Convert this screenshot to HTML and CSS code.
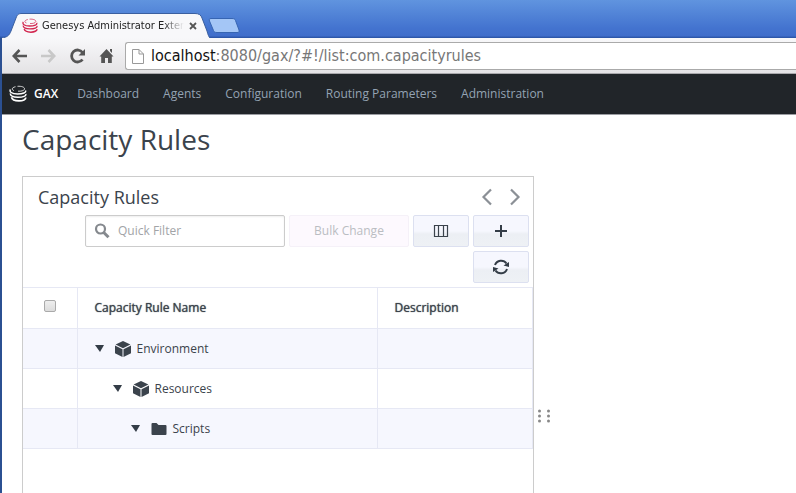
FILE: index.html
```html
<!DOCTYPE html>
<html lang="en">
<head>
<meta charset="utf-8">
<title>Genesys Administrator Exter</title>
<link rel="stylesheet" href="styles.css">
</head>
<body>
<svg class="sprite" aria-hidden="true">
  <symbol id="rings" viewBox="0 0 18 18">
    <g fill="none" stroke="currentColor">
      <path d="M5 5.600C2 4.500 3 2.500 6.500 1.700M8.500 1.300C12.500 1 16 2.200 15.500 4.200C15 5.800 12 6.300 9 6.200" stroke-width="1" opacity=".8"/>
      <path d="M1.500 4.500C0 6.500 2.500 9 8.500 9C14 9 17.500 7.500 16.500 5.500" stroke-width="1.500"/>
      <path d="M1.500 8.500C1 10.500 3.500 12.300 9 12.300C14 12.300 17.500 11 16.800 9" stroke-width="1.500"/>
      <path d="M2.500 12.300C3 14.500 6 15.900 10 15.900C14 15.900 17 14.500 16.800 12.500" stroke-width="1.700"/>
    </g>
  </symbol>
  <symbol id="cube" viewBox="0 0 16 16">
    <path fill="currentColor" d="M8 0L15.400 3.500L8 7.200L.6 3.500ZM0 4.600L7.500 8.200V16L0 12.200ZM16 4.600V12.200L8.500 16V8.200Z"/>
  </symbol>
</svg>

<div class="window">
  <header class="titlebar">
    <div class="tab">
      <svg class="tab-shape" viewBox="0 0 208 25" aria-hidden="true"><path d="M0 25C5 24 7 23 9 18L14 5C15.500 1 17 .5 20 .5H193C197 .5 199 2 200 5L205 18C206 22 207 24 208 25Z" fill="#f8f8fa"/><path d="M0 25C5 24 7 23 9 18L14 5C15.500 1 17 .5 20 .5H193C197 .5 199 2 200 5L205 18C206 22 207 24 208 25" fill="none" stroke="#3a5f9f"/></svg>
      <svg class="tab-logo" aria-hidden="true"><use href="#rings"/></svg>
      <span class="tab-title">Genesys Administrator Exter</span>
      <button class="tab-close" aria-label="Close tab"><svg viewBox="0 0 8 8"><path d="M1 1L7 7M7 1L1 7" stroke="#555" stroke-width="1.800"/></svg></button>
    </div>
    <button class="new-tab" aria-label="New tab"><svg viewBox="0 0 32 17"><path d="M3 1.500H24C26 1.500 27 2 27.500 3.500L31 13C31.500 15 31 15.500 29 15.500H9C7 15.500 6 15 5.500 13.500L1.500 4C1 2.500 1 1.500 3 1.500Z" fill="#a4c6f6" stroke="#3765b2"/></svg></button>
  </header>

  <div class="browserbar">
    <button class="tool" aria-label="Back"><svg viewBox="0 0 16 16"><path d="M15 8H2.500M7.500 2L1.800 8L7.500 14" fill="none" stroke="#555" stroke-width="2.600"/></svg></button>
    <button class="tool" aria-label="Forward"><svg viewBox="0 0 16 16"><path d="M0 8H12.500M7.500 2L13.200 8L7.500 14" fill="none" stroke="#c8c8c8" stroke-width="2.600"/></svg></button>
    <button class="tool" aria-label="Reload"><svg viewBox="0 0 16 16"><path d="M12.500 4.500A6 6 0 1 0 12.500 11.500" fill="none" stroke="#555" stroke-width="2.800"/><path d="M15 1V7.500H8.500Z" fill="#555"/></svg></button>
    <button class="tool" aria-label="Home"><svg viewBox="0 0 16 16"><path d="M7.500 1L14.500 8.500H12.800V15H9V10H6V15H2.200V8.500H.5ZM11 1H13V5L11 3Z" fill="#555"/></svg></button>
    <div class="address">
      <svg class="page-icon" viewBox="0 0 12 16" aria-hidden="true"><path d="M.5 1.500H7L11.500 6V15.500H.5ZM7 1.500V6H11.500" fill="#fff" stroke="#999"/></svg>
      <span class="url"><b>localhost</b>:8080/gax/?#!/list:com.capacityrules</span>
    </div>
  </div>

  <nav class="appnav">
    <a class="brand" href="#"><svg aria-hidden="true"><use href="#rings"/></svg>GAX</a>
    <a href="#">Dashboard</a>
    <a href="#">Agents</a>
    <a href="#">Configuration</a>
    <a href="#">Routing Parameters</a>
    <a href="#">Administration</a>
  </nav>

  <main>
    <h1>Capacity Rules</h1>
    <div class="split">
      <section class="panel">
        <div class="panel-head">
          <h2>Capacity Rules</h2>
          <div class="pager">
            <button aria-label="Previous"><svg viewBox="0 0 12 18"><path d="M10 1.500L2.500 9L10 16.500" fill="none" stroke="#8b9096" stroke-width="2.200"/></svg></button>
            <button aria-label="Next"><svg viewBox="0 0 12 18"><path d="M2 1.500L9.500 9L2 16.500" fill="none" stroke="#8b9096" stroke-width="2.200"/></svg></button>
          </div>
        </div>
        <div class="actions">
          <label class="search">
            <svg viewBox="0 0 16 16" aria-hidden="true"><circle cx="6.500" cy="6" r="4.500" fill="none" stroke="#85898e" stroke-width="2.200"/><path d="M9.500 9.300L14.500 14.200" stroke="#85898e" stroke-width="3"/></svg>
            <input type="text" placeholder="Quick Filter" aria-label="Quick Filter">
          </label>
          <button class="btn bulk" disabled>Bulk Change</button>
          <button class="btn" aria-label="Columns"><svg viewBox="0 0 16 16"><path d="M1.500 2.500H14.500V13.500H1.500ZM5.500 2.500V13.500M10.500 2.500V13.500" fill="none" stroke="#3b434c" stroke-width="1.200"/></svg></button>
          <button class="btn" aria-label="Add"><svg viewBox="0 0 16 16"><path d="M2 8H14M8 2V14" stroke="#343d47" stroke-width="2"/></svg></button>
          <button class="btn" aria-label="Refresh"><svg viewBox="0 0 16 16"><path d="M2 6A6.500 6.500 0 0 1 13.500 4.500M14 10A6.500 6.500 0 0 1 2.500 11.500" fill="none" stroke="#343d47" stroke-width="2"/><path d="M16 3V8L10.500 6.500ZM0 13V8L5.500 9.500Z" fill="#343d47"/></svg></button>
        </div>
        <table>
          <thead>
            <tr><th class="check"><input type="checkbox" aria-label="Select all"></th><th class="name">Capacity Rule Name</th><th>Description</th></tr>
          </thead>
          <tbody>
            <tr><td></td><td><div class="node"><i class="caret"></i><svg class="kind" aria-hidden="true"><use href="#cube"/></svg>Environment</div></td><td></td></tr>
            <tr><td></td><td><div class="node level-2"><i class="caret"></i><svg class="kind" aria-hidden="true"><use href="#cube"/></svg>Resources</div></td><td></td></tr>
            <tr><td></td><td><div class="node level-3"><i class="caret"></i><svg class="kind" viewBox="0 0 16 16" aria-hidden="true"><path d="M.5 3Q.5 2 1.500 2H5.500L7.500 4H14.500Q15.500 4 15.500 5V13Q15.500 14 14.500 14H1.500Q.5 14 .5 13Z" fill="currentColor"/></svg>Scripts</div></td><td></td></tr>
          </tbody>
        </table>
      </section>
      <div class="grip"><svg viewBox="0 0 12 14" aria-hidden="true"><g fill="#888"><circle cx="1.500" cy="2" r="1.500"/><circle cx="10.500" cy="2" r="1.500"/><circle cx="1.500" cy="7" r="1.500"/><circle cx="10.500" cy="7" r="1.500"/><circle cx="1.500" cy="12" r="1.500"/><circle cx="10.500" cy="12" r="1.500"/></g></svg></div>
    </div>
  </main>
</div>
</body>
</html>
```
FILE: styles.css
```css
* { box-sizing: border-box; }
body { margin: 0; background: #fff; color: #3b434c; font: 12px/16px "Open Sans", sans-serif; overflow: hidden; }
button { padding: 0; border: 0; background: none; font: inherit; color: inherit; }
svg { display: block; }
a { text-decoration: none; color: inherit; }
.sprite { position: absolute; width: 0; height: 0; }

.window { display: flex; flex-direction: column; min-height: 100vh; border-left: 2px solid #2b5092; }

/* Browser chrome */
.titlebar { display: flex; align-items: flex-end; height: 38px; margin-left: -2px; padding-left: 2px; background: linear-gradient(#6094df, #4373cf 75%, #406ecb 94%, #2850a0); }
.tab { position: relative; display: flex; align-items: center; width: 208px; height: 25px; padding: 0 15px 0 20px; }
.tab-shape { position: absolute; left: 0; top: 0; width: 208px; height: 25px; }
.tab-logo { position: relative; flex: none; width: 16px; height: 16px; color: #d2264f; }
.tab-title { position: relative; flex: 1; margin: 0 5px 0 4px; white-space: nowrap; color: #222; font: 11px/16px "DejaVu Sans Condensed", "DejaVu Sans", sans-serif; -webkit-mask-image: linear-gradient(90deg, #000 85%, transparent); mask-image: linear-gradient(90deg, #000 85%, transparent); }
.tab-close { position: relative; width: 8px; height: 8px; }
.tab-close svg { width: 8px; height: 8px; }
.new-tab { width: 32px; height: 17px; margin: 0 0 4px -2px; }

.browserbar { display: flex; align-items: center; gap: 13px; height: 36px; padding-left: 10px; background: linear-gradient(#f8f8fa, #e4e3e5); border-bottom: 1px solid #a9a8ac; }
.tool { flex: none; width: 16px; height: 16px; }
.address { display: flex; flex: 1; align-items: center; gap: 7px; height: 28px; margin-left: -3px; padding-left: 6px; background: #fff; border: 1px solid #aaa; border-right: 0; border-radius: 3px 0 0 3px; }
.page-icon { width: 12px; height: 16px; }
.url { color: #777; font: 16px/24px "DejaVu Sans Condensed", "DejaVu Sans", sans-serif; white-space: nowrap; }
.url b { color: #111; font-weight: 400; }

/* Application */
.appnav { display: flex; align-items: center; gap: 24px; height: 41px; padding-left: 7px; background: #212529; border-bottom: 1px solid #9b9da2; color: #94a3b3; }
.brand { display: flex; align-items: center; gap: 7px; margin-right: -5px; color: #fff; font-weight: 600; }
.brand svg { width: 18px; height: 18px; }

main { display: flex; flex: 1; flex-direction: column; padding: 5px 6px 0 20px; }
h1 { margin: 0 0 18px; font-size: 28px; line-height: 38px; font-weight: 400; }
.split { display: grid; flex: 1; grid-template-columns: minmax(0, 2fr) minmax(0, 1fr); }
.panel { border: 1px solid #ccc; border-bottom: 0; }
.panel-head { display: flex; align-items: center; justify-content: space-between; height: 38px; padding: 2px 12px 0 15px; }
h2 { margin: 0; font-size: 18px; line-height: 24px; font-weight: 400; }
.pager { display: flex; gap: 16px; }
.pager svg { width: 12px; height: 18px; }
.actions { display: flex; flex-wrap: wrap; justify-content: flex-end; gap: 4px; padding: 0 4px 4px; }
.search { display: flex; align-items: center; gap: 8px; width: 200px; height: 32px; padding: 0 8px; border: 1px solid #ccc; border-radius: 2px; box-shadow: inset 0 1px 2px #eee; }
.search svg { flex: none; width: 16px; height: 16px; }
.search input { width: 100%; min-width: 0; padding: 0; border: 0; outline: 0; background: none; font: inherit; }
.search input::placeholder { color: #a2a4a7; }
.btn { display: flex; align-items: center; justify-content: center; width: 56px; height: 32px; border: 1px solid #dce0f0; border-radius: 2px; background: linear-gradient(#f6f7fe 50%, #eceff4 60%, #eef1f5); }
.btn svg { width: 16px; height: 16px; }
.bulk { width: 120px; background: #fdf9fe; border-color: #f5f1f8; color: #babdc2; }

table { width: 100%; border-collapse: collapse; table-layout: fixed; }
th, td { height: 40px; padding: 0 17px; border: 1px solid #e6e8f4; border-left: 0; text-align: left; }
th { height: 41px; font-weight: 400; text-shadow: 0 0 1px #3b434c; }
.check { width: 54px; padding: 0; text-align: center; }
.name { width: 300px; }
.check input { appearance: none; width: 12px; height: 12px; margin: 0; border: 1px solid #aaa; border-radius: 2px; background: linear-gradient(#eee, #dcdcdc); }
tbody tr:nth-child(odd) { background: #f6f7fe; }
.node { display: flex; align-items: center; }
.level-2 { padding-left: 18px; }
.level-3 { padding-left: 36px; }
.caret { margin-right: 11px; border: solid transparent; border-width: 7px 4px 0 5px; border-top-color: #343d47; }
.kind { width: 16px; height: 16px; margin-right: 6px; color: #3b434c; }
.grip { padding: 233px 0 0 4px; }
.grip svg { width: 12px; height: 14px; }
```
